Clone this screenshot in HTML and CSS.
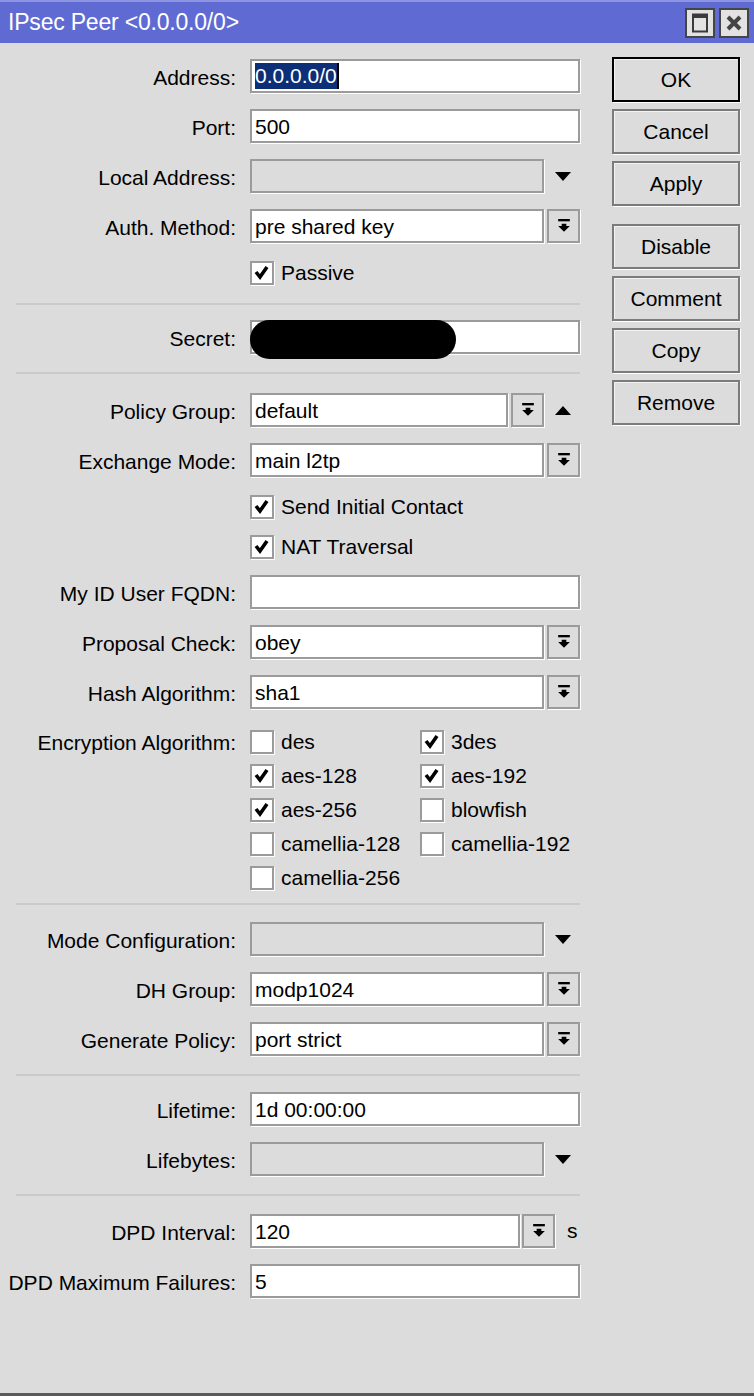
FILE: index.html
```html
<!DOCTYPE html>
<html>
<head>
  <title>IPsec Peer</title>
  <link rel="stylesheet" href="styles.css">
</head>
<body>
  <svg class="defs" width="0" height="0">
    <symbol id="combo" viewBox="0 0 12 12">
      <rect x="1" y="0" width="10" height="2"/>
      <polygon points="4,4 8,4 8,6 11,6 6,11 1,6 4,6"/>
    </symbol>
    <symbol id="tick" viewBox="0 0 20 20">
      <polyline points="4,9 8,14 15,4" fill="none" stroke="#000" stroke-width="3.6"/>
    </symbol>
  </svg>

  <div class="window">
    <div class="titlebar">
      <span class="title">IPsec Peer &lt;0.0.0.0/0&gt;</span>
      <div class="win-buttons">
        <div class="win-btn">
          <svg width="16" height="20" viewBox="0 0 16 20"><rect x="1" y="1.5" width="14" height="17" fill="none" stroke="#3a3a3a" stroke-width="2"/><rect x="1" y="1" width="14" height="4" fill="#3a3a3a"/></svg>
        </div>
        <div class="win-btn">
          <svg width="16" height="16" viewBox="0 0 16 16"><path d="M2 2 L14 14 M14 2 L2 14" stroke="#444" stroke-width="4"/></svg>
        </div>
      </div>
    </div>

    <div class="main">
      <div class="form">
        <div class="section first">
          <div class="row">
            <label>Address:</label>
            <div class="field"><div class="input"><span class="selected">0.0.0.0/0</span><span class="caret"></span></div></div>
          </div>
          <div class="row">
            <label>Port:</label>
            <div class="field"><div class="input">500</div></div>
          </div>
          <div class="row">
            <label>Local Address:</label>
            <div class="field"><div class="input disabled"></div><span class="arrow-slot"><span class="tri-down"></span></span></div>
          </div>
          <div class="row">
            <label>Auth. Method:</label>
            <div class="field"><div class="input">pre shared key</div><span class="drop"><svg><use href="#combo"/></svg></span></div>
          </div>
          <div class="row check-row">
            <label></label>
            <div class="check"><span class="box"><svg><use href="#tick"/></svg></span>Passive</div>
          </div>
        </div>

        <div class="divider"></div>

        <div class="section secret-sec">
          <div class="row">
            <label>Secret:</label>
            <div class="field secret"><div class="input"></div><span class="redact"></span></div>
          </div>
        </div>

        <div class="divider"></div>

        <div class="section policy-sec">
          <div class="row">
            <label>Policy Group:</label>
            <div class="field"><div class="input">default</div><span class="drop"><svg><use href="#combo"/></svg></span><span class="arrow-slot"><span class="tri-up"></span></span></div>
          </div>
          <div class="row">
            <label>Exchange Mode:</label>
            <div class="field"><div class="input">main l2tp</div><span class="drop"><svg><use href="#combo"/></svg></span></div>
          </div>
          <div class="row check-row">
            <label></label>
            <div class="check"><span class="box"><svg><use href="#tick"/></svg></span>Send Initial Contact</div>
          </div>
          <div class="row check-row next">
            <label></label>
            <div class="check"><span class="box"><svg><use href="#tick"/></svg></span>NAT Traversal</div>
          </div>
          <div class="row">
            <label>My ID User FQDN:</label>
            <div class="field"><div class="input"></div></div>
          </div>
          <div class="row">
            <label>Proposal Check:</label>
            <div class="field"><div class="input">obey</div><span class="drop"><svg><use href="#combo"/></svg></span></div>
          </div>
          <div class="row">
            <label>Hash Algorithm:</label>
            <div class="field"><div class="input">sha1</div><span class="drop"><svg><use href="#combo"/></svg></span></div>
          </div>
          <div class="row enc-row">
            <label>Encryption Algorithm:</label>
            <div class="enc-grid">
              <div class="check"><span class="box"></span>des</div>
              <div class="check"><span class="box"><svg><use href="#tick"/></svg></span>3des</div>
              <div class="check"><span class="box"><svg><use href="#tick"/></svg></span>aes-128</div>
              <div class="check"><span class="box"><svg><use href="#tick"/></svg></span>aes-192</div>
              <div class="check"><span class="box"><svg><use href="#tick"/></svg></span>aes-256</div>
              <div class="check"><span class="box"></span>blowfish</div>
              <div class="check"><span class="box"></span>camellia-128</div>
              <div class="check"><span class="box"></span>camellia-192</div>
              <div class="check"><span class="box"></span>camellia-256</div>
            </div>
          </div>
        </div>

        <div class="divider"></div>

        <div class="section">
          <div class="row">
            <label>Mode Configuration:</label>
            <div class="field"><div class="input disabled"></div><span class="arrow-slot"><span class="tri-down"></span></span></div>
          </div>
          <div class="row">
            <label>DH Group:</label>
            <div class="field"><div class="input">modp1024</div><span class="drop"><svg><use href="#combo"/></svg></span></div>
          </div>
          <div class="row">
            <label>Generate Policy:</label>
            <div class="field"><div class="input">port strict</div><span class="drop"><svg><use href="#combo"/></svg></span></div>
          </div>
        </div>

        <div class="divider"></div>

        <div class="section life-sec">
          <div class="row">
            <label>Lifetime:</label>
            <div class="field"><div class="input">1d 00:00:00</div></div>
          </div>
          <div class="row">
            <label>Lifebytes:</label>
            <div class="field"><div class="input disabled"></div><span class="arrow-slot"><span class="tri-down"></span></span></div>
          </div>
        </div>

        <div class="divider"></div>

        <div class="section dpd-sec">
          <div class="row">
            <label>DPD Interval:</label>
            <div class="field dpd"><div class="input">120</div><span class="drop"><svg><use href="#combo"/></svg></span><span class="unit">s</span></div>
          </div>
          <div class="row">
            <label>DPD Maximum Failures:</label>
            <div class="field"><div class="input">5</div></div>
          </div>
        </div>
      </div>

      <div class="actions">
        <button class="default">OK</button>
        <button>Cancel</button>
        <button>Apply</button>
        <button class="spaced">Disable</button>
        <button>Comment</button>
        <button>Copy</button>
        <button>Remove</button>
      </div>
    </div>
  </div>
</body>
</html>
```

FILE: styles.css
```css
html, body {
  margin: 0;
  padding: 0;
  background-color: #dcdcdc;
}

body {
  font-family: 'Liberation Sans', Arial, sans-serif;
  font-size: 21px;
  color: #000;
}

.defs {
  position: absolute;
  width: 0;
  height: 0;
}

.window {
  height: 1396px;
  box-sizing: border-box;
  border-bottom: 3px solid #5a5a5a;
}

/* title bar */
.titlebar {
  height: 41px;
  background-color: #5f6bd3;
  border-top: 2px solid #8d94e2;
  display: flex;
  align-items: center;
  justify-content: space-between;
  padding: 0 5px 0 8px;
}

.title {
  color: #fff;
  font-size: 23px;
  letter-spacing: -0.2px;
}

.win-buttons {
  display: flex;
  gap: 4px;
}

.win-btn {
  width: 30px;
  height: 30px;
  box-sizing: border-box;
  border: 2px solid #454545;
  background-color: #e2e2e2;
  display: flex;
  align-items: center;
  justify-content: center;
}

/* layout */
.main {
  display: flex;
}

.form {
  width: 580px;
}

.actions {
  margin-left: 32px;
  width: 128px;
  padding-top: 14px;
  display: flex;
  flex-direction: column;
  gap: 7px;
}

.section {
  display: flex;
  flex-direction: column;
  gap: 16px;
  padding: 17px 0 18px;
}

.section.first { padding-top: 16px; }
.secret-sec { padding-top: 15px; }
.policy-sec { padding-top: 19px; padding-bottom: 8px; }
.life-sec { padding-top: 16px; }
.dpd-sec { padding-top: 18px; }

.divider {
  margin-left: 16px;
  height: 2px;
  background-color: #cacaca;
}

.row {
  display: flex;
  align-items: center;
  height: 34px;
}

.row label {
  width: 250px;
  box-sizing: border-box;
  padding: 3px 14px 0 0;
  text-align: right;
  flex-shrink: 0;
  white-space: nowrap;
}

.check-row {
  height: 24px;
  margin-top: 2px;
}

.check-row.next {
  margin-top: 0;
}

.field {
  width: 330px;
  height: 34px;
  display: flex;
  position: relative;
}

.input {
  flex: 1;
  min-width: 0;
  box-sizing: border-box;
  height: 34px;
  border: 2px solid #9b9b9b;
  box-shadow: 1px 1px 0 #fff;
  background-color: #fff;
  padding: 1px 3px 0;
  line-height: 30px;
  white-space: nowrap;
  overflow: hidden;
}

.input.disabled {
  background-color: #dcdcdc;
}

.selected {
  background-color: #0c2f78;
  color: #fff;
  display: inline-block;
  line-height: 26px;
  vertical-align: top;
  margin-top: 1px;
}

.caret {
  display: inline-block;
  width: 2px;
  height: 26px;
  margin-top: 1px;
  vertical-align: top;
  background-color: #000;
}

.drop {
  width: 33px;
  height: 34px;
  box-sizing: border-box;
  margin-left: 3px;
  border: 2px solid #9b9b9b;
  box-shadow: 1px 1px 0 #fff;
  background-color: #dcdcdc;
  display: flex;
  align-items: center;
  justify-content: center;
  flex-shrink: 0;
}

.drop svg {
  width: 14px;
  height: 14px;
}

.arrow-slot {
  width: 36px;
  flex-shrink: 0;
  display: flex;
  align-items: center;
  justify-content: center;
}

.tri-down,
.tri-up {
  width: 0;
  height: 0;
  border-left: 8px solid transparent;
  border-right: 8px solid transparent;
}

.tri-down { border-top: 9px solid #000; margin-left: 2px; }
.tri-up { border-bottom: 9px solid #000; margin-left: 2px; }

.dpd .input {
  flex: none;
  width: 270px;
}

.dpd .drop { margin-left: 2px; }

.unit {
  flex-shrink: 0;
  padding-left: 12px;
  line-height: 34px;
}

.secret .redact {
  position: absolute;
  left: 0;
  top: 0;
  width: 206px;
  height: 39px;
  border-radius: 20px;
  background-color: #000;
}

/* checkboxes */
.check {
  display: flex;
  align-items: center;
  height: 24px;
  white-space: nowrap;
}

.box {
  width: 24px;
  height: 24px;
  box-sizing: border-box;
  border: 2px solid #9b9b9b;
  box-shadow: 1px 1px 0 #fff;
  background-color: #fff;
  margin-right: 7px;
  display: flex;
  align-items: center;
  justify-content: center;
  flex-shrink: 0;
}

.box svg {
  width: 20px;
  height: 20px;
}

.enc-row {
  height: auto;
  align-items: flex-start;
}

.enc-row label {
  line-height: 34px;
  padding-top: 1px;
}

.enc-grid {
  display: grid;
  grid-template-columns: 170px 170px;
  grid-auto-rows: 34px;
  align-items: center;
}

/* buttons */
button {
  font-family: inherit;
  font-size: 21px;
  color: #000;
  height: 45px;
  background-color: #dcdcdc;
  border: 2px solid #7b7b7b;
  box-shadow: 1px 1px 0 #fff, inset 1px 1px 0 #f2f2f2;
  padding: 0;
}

button.default {
  border-color: #000;
}

button.spaced {
  margin-top: 11px;
}
```
